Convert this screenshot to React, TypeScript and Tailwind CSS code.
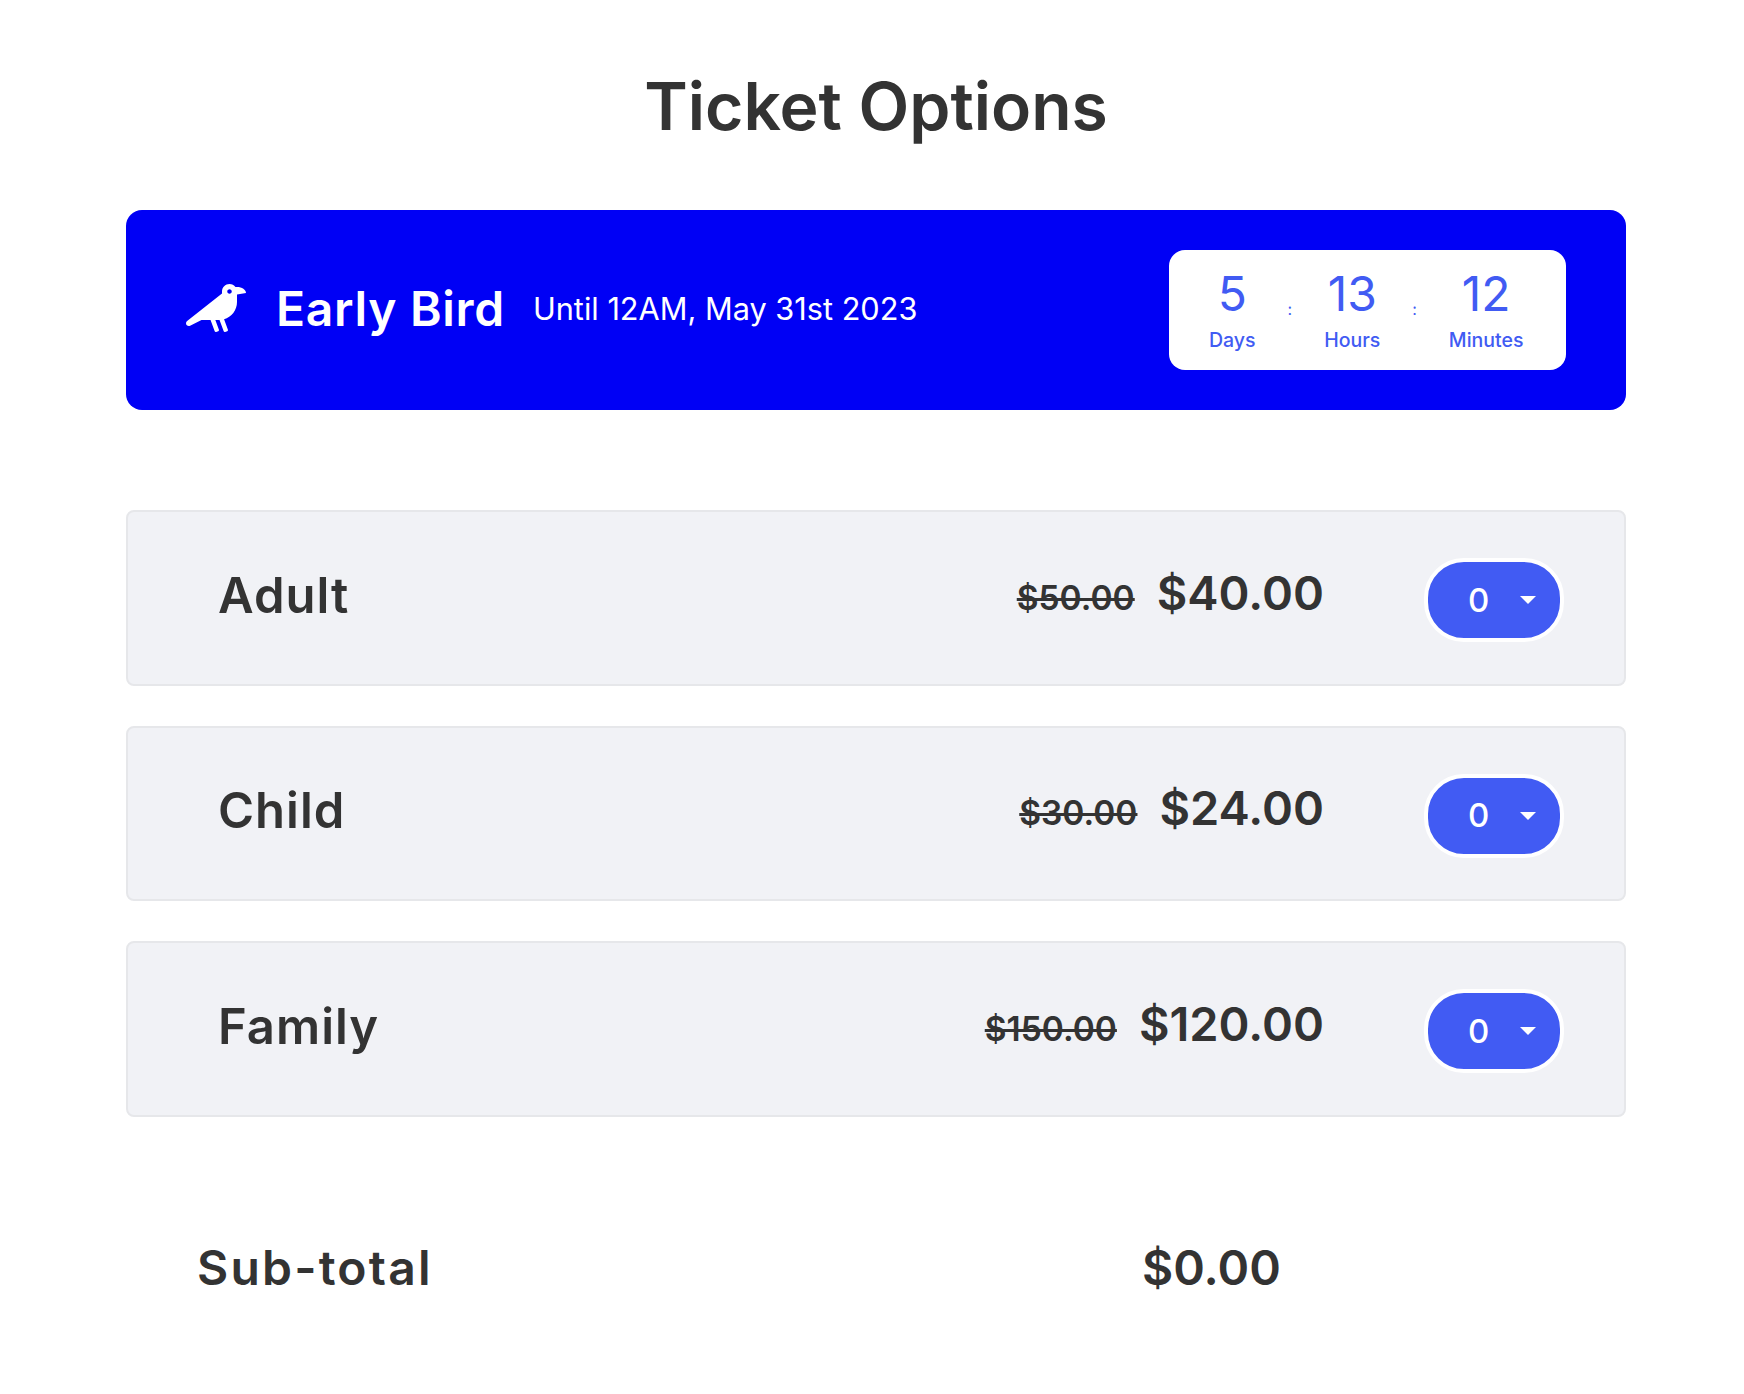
import { FaCrow } from 'react-icons/fa'

const TICKETS = [
  { name: 'Adult', was: '$50.00', now: '$40.00' },
  { name: 'Child', was: '$30.00', now: '$24.00' },
  { name: 'Family', was: '$150.00', now: '$120.00' },
]

const COUNTDOWN = [
  { value: '5', label: 'Days' },
  { value: '13', label: 'Hours' },
  { value: '12', label: 'Minutes' },
]

function TicketRow({ name, was, now }: { name: string; was: string; now: string }) {
  return (
    <div className="flex h-[175.5px] items-center rounded-lg border-2 border-[#e6e7ea] bg-[#f1f2f6] pl-[90px] pr-[60px]">
      <div className="mb-[5px] text-[49px] font-semibold leading-none tracking-[1px] text-[#333333]">{name}</div>
      <div className="mb-[11px] ml-auto flex items-baseline gap-[22px]">
        <span className="text-[33.5px] font-semibold leading-none text-[#333333] line-through">{was}</span>
        <span className="text-[47px] font-semibold leading-none text-[#333333]">{now}</span>
      </div>
      <div className="ml-[100px] mt-[5px] flex h-[84px] w-[140px] items-center rounded-[40px] border-4 border-white bg-[#415bf3] pl-[40px]">
        <span className="w-[34px] text-[33px] font-medium leading-none text-white">0</span>
        <span className="ml-[18px] h-0 w-0 border-x-[8px] border-t-[8px] border-x-transparent border-t-white" />
      </div>
    </div>
  )
}

export default function App() {
  return (
    <div className="min-h-[1394px] bg-white font-['Inter',sans-serif]">
      <div className="ml-[126px] w-[1500px] pt-[66px]">
        <h1 className="text-center text-[66px] font-semibold leading-[80px] text-[#333333]">Ticket Options</h1>

        <div className="mt-[64px] flex h-[200px] items-center rounded-2xl bg-[#0000f5] pl-[60px] pr-[60px]">
          <FaCrow className="mb-[4px] h-[48px] w-[60px] text-white" />
          <span className="mb-[2px] ml-[30px] text-[48px] font-semibold leading-none tracking-[0.7px] text-white">
            Early Bird
          </span>
          <span className="mb-[2px] ml-[28px] text-[30.7px] leading-none text-white">Until 12AM, May 31st 2023</span>

          <div className="ml-auto flex h-[120px] w-[397px] items-center gap-[32px] rounded-2xl bg-white pl-[40px] text-[#415bf3]">
            {COUNTDOWN.map((c, i) => (
              <div key={c.label} className="flex items-center gap-[32px]">
                {i > 0 && <span className="mb-[2px] text-[16px] leading-none">:</span>}
                <div className="mb-[1px] flex flex-col items-center gap-[5px]">
                  <span className="text-[48px] leading-[56px]">{c.value}</span>
                  <span className="text-[19.5px] font-medium leading-[26px]">{c.label}</span>
                </div>
              </div>
            ))}
          </div>
        </div>

        <div className="mt-[100px] flex flex-col gap-[40px]">
          {TICKETS.map(t => (
            <TicketRow key={t.name} {...t} />
          ))}
        </div>

        <div className="mt-[127.5px] flex items-center pl-[71px] text-[48px] font-semibold leading-none text-[#333333]">
          <span className="w-[945px] tracking-[2.2px]">Sub-total</span>
          <span>$0.00</span>
        </div>
      </div>
    </div>
  )
}
